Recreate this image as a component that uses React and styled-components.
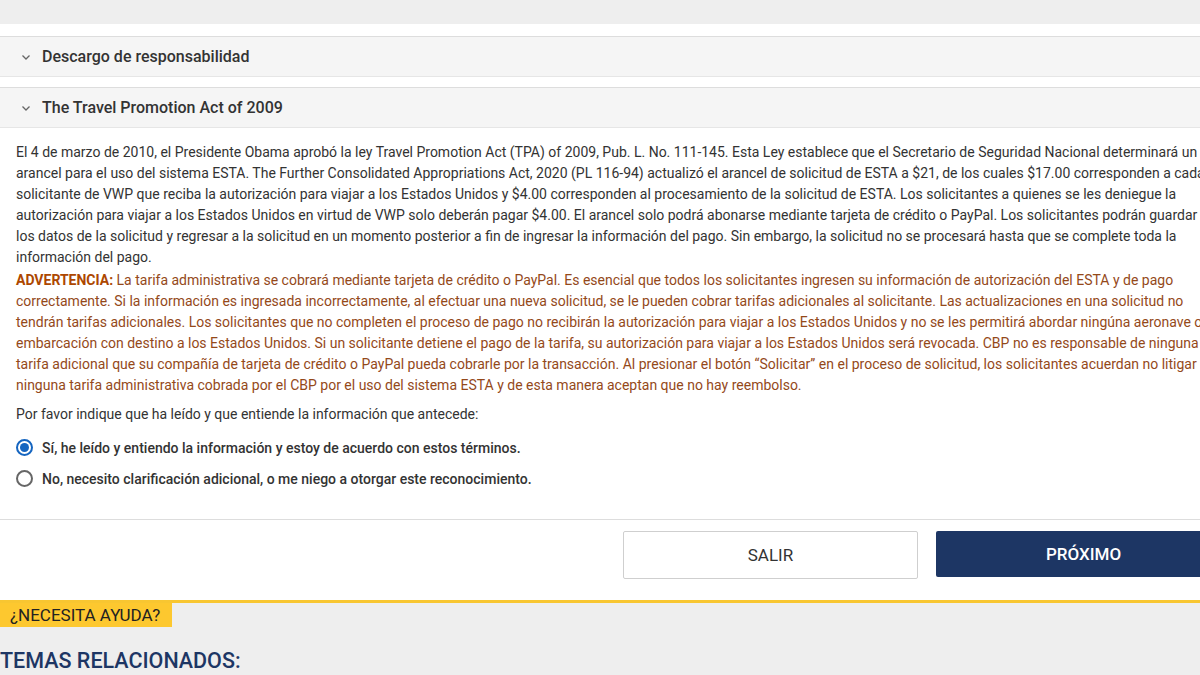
import React, { useState } from "react";
import styled, { createGlobalStyle } from "styled-components";

const GlobalStyle = createGlobalStyle`
  html, body {
    margin: 0;
    padding: 0;
    background: #fff;
    overflow: hidden;
  }
  body {
    font-family: Roboto, "Liberation Sans", Arial, sans-serif;
    color: #333;
  }
`;

const Page = styled.div`
  width: 1250px;
`;

const TopBar = styled.div`
  height: 24px;
  background: #eeeeee;
  margin-bottom: 12px;
`;

const AccordionHeader = styled.div`
  display: flex;
  align-items: center;
  gap: 10px;
  height: 39px;
  padding-left: 20px;
  background: #f5f5f5;
  border-top: 1px solid #dddddd;
  border-bottom: 1px solid #e6e6e6;
  margin-bottom: ${p => (p.open ? "0" : "10px")};
  font-size: 16px;
  font-weight: 500;
  color: #333;
`;

const Chevron = () => (
  <svg width="12" height="12" viewBox="0 0 12 12">
    <path d="M2.5 4.5 L6 8 L9.5 4.5" fill="none" stroke="#666" strokeWidth="1.3" />
  </svg>
);

const Content = styled.div`
  padding: 14px 16px 0 16px;
  width: 1198px;
`;

const Para = styled.p`
  margin: 0 0 2px 0;
  font-size: 14px;
  line-height: 21px;
  color: ${p => (p.warn ? "#94491a" : "#333")};
`;

const Strong = styled.strong`
  font-weight: 700;
  color: #ad4700;
`;

const Prompt = styled.p`
  margin: 8px 0 7px 0;
  font-size: 14px;
  line-height: 21px;
  color: #333;
`;

const RadioRow = styled.label`
  display: flex;
  align-items: center;
  gap: 9px;
  height: 31px;
  font-size: 14px;
  font-weight: 500;
  color: #333;
  cursor: pointer;
`;

const RadioCircle = styled.span`
  box-sizing: border-box;
  width: 17px;
  height: 17px;
  border-radius: 50%;
  border: 2px solid ${p => (p.checked ? "#1565c0" : "#666")};
  display: flex;
  align-items: center;
  justify-content: center;
  &::after {
    content: "";
    width: 9px;
    height: 9px;
    border-radius: 50%;
    background: ${p => (p.checked ? "#1565c0" : "transparent")};
  }
`;

const ButtonRow = styled.div`
  display: flex;
  justify-content: flex-end;
  gap: 18px;
  margin-top: 25px;
  padding: 11px 19px 21px 0;
  border-top: 1px solid #dddddd;
`;

const Button = styled.button`
  box-sizing: border-box;
  width: 295px;
  height: ${p => (p.primary ? "46px" : "48px")};
  font-family: Roboto, "Liberation Sans", Arial, sans-serif;
  font-size: 17px;
  font-weight: ${p => (p.primary ? 500 : 400)};
  color: ${p => (p.primary ? "#fff" : "#333")};
  background: ${p => (p.primary ? "#1d3664" : "#fff")};
  border: ${p => (p.primary ? "none" : "1px solid #cfcfcf")};
  border-radius: 2px;
  cursor: pointer;
`;

const Footer = styled.div`
  border-top: 3px solid #f8c631;
  background: #eeeeee;
  height: 120px;
`;

const HelpTab = styled.div`
  display: inline-block;
  background: #fdc82f;
  padding: 0 12px 0 10px;
  height: 24px;
  line-height: 24px;
  font-size: 17px;
  color: #222;
`;

const Related = styled.h2`
  margin: 21px 0 0 0;
  font-size: 21.5px;
  font-weight: 500;
  color: #1d3664;
`;

export default function App() {
  const [choice, setChoice] = useState("yes");

  return (
    <Page>
      <GlobalStyle />
      <TopBar />
      <AccordionHeader>
        <Chevron />
        Descargo de responsabilidad
      </AccordionHeader>
      <AccordionHeader open>
        <Chevron />
        The Travel Promotion Act of 2009
      </AccordionHeader>
      <Content>
        <Para>
          El 4 de marzo de 2010, el Presidente Obama aprobó la ley Travel Promotion Act (TPA) of 2009, Pub. L. No. 111-145. Esta Ley establece que el Secretario de Seguridad Nacional determinará un arancel para el uso del sistema ESTA. The Further Consolidated Appropriations Act, 2020 (PL 116-94) actualizó el arancel de solicitud de ESTA a $21, de los cuales $17.00 corresponden a cada solicitante de VWP que reciba la autorización para viajar a los Estados Unidos y $4.00 corresponden al procesamiento de la solicitud de ESTA. Los solicitantes a quienes se les deniegue la autorización para viajar a los Estados Unidos en virtud de VWP solo deberán pagar $4.00. El arancel solo podrá abonarse mediante tarjeta de crédito o PayPal. Los solicitantes podrán guardar los datos de la solicitud y regresar a la solicitud en un momento posterior a fin de ingresar la información del pago. Sin embargo, la solicitud no se procesará hasta que se complete toda la información del pago.
        </Para>
        <Para warn>
          <Strong>ADVERTENCIA:</Strong> La tarifa administrativa se cobrará mediante tarjeta de crédito o PayPal. Es esencial que todos los solicitantes ingresen su información de autorización del ESTA y de pago correctamente. Si la información es ingresada incorrectamente, al efectuar una nueva solicitud, se le pueden cobrar tarifas adicionales al solicitante. Las actualizaciones en una solicitud no tendrán tarifas adicionales. Los solicitantes que no completen el proceso de pago no recibirán la autorización para viajar a los Estados Unidos y no se les permitirá abordar ningúna aeronave o embarcación con destino a los Estados Unidos. Si un solicitante detiene el pago de la tarifa, su autorización para viajar a los Estados Unidos será revocada. CBP no es responsable de ninguna tarifa adicional que su compañía de tarjeta de crédito o PayPal pueda cobrarle por la transacción. Al presionar el botón “Solicitar” en el proceso de solicitud, los solicitantes acuerdan no litigar ninguna tarifa administrativa cobrada por el CBP por el uso del sistema ESTA y de esta manera aceptan que no hay reembolso.
        </Para>
        <Prompt>Por favor indique que ha leído y que entiende la información que antecede:</Prompt>
        <RadioRow onClick={() => setChoice("yes")}>
          <RadioCircle checked={choice === "yes"} />
          Sí, he leído y entiendo la información y estoy de acuerdo con estos términos.
        </RadioRow>
        <RadioRow onClick={() => setChoice("no")}>
          <RadioCircle checked={choice === "no"} />
          No, necesito clarificación adicional, o me niego a otorgar este reconocimiento.
        </RadioRow>
      </Content>
      <ButtonRow>
        <Button>SALIR</Button>
        <Button primary>PRÓXIMO</Button>
      </ButtonRow>
      <Footer>
        <HelpTab>¿NECESITA AYUDA?</HelpTab>
        <Related>TEMAS RELACIONADOS:</Related>
      </Footer>
    </Page>
  );
}
